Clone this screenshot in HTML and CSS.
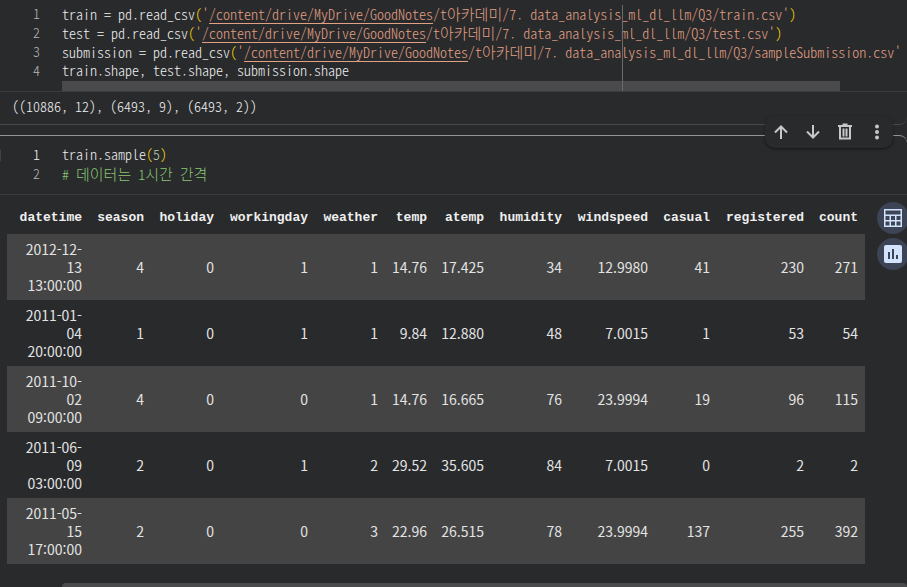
FILE: index.html
```
<!DOCTYPE html>
<html lang="ko">
<head>
  <meta charset="UTF-8" />
  <meta name="viewport" content="width=device-width, initial-scale=1.0"/>
  <title>Notebook</title>
  <link rel="stylesheet" href="styles.css">
</head>
<body>
  <section class="cell">
    <div class="editor">
      <div class="ruler"></div>
      <div class="line"><span class="num">1</span><code>train = pd.read_csv<span class="paren">(</span><span class="str">'<a href="#">/content/drive/MyDrive/GoodNotes</a>/t<span class="ko">아카데미</span>/7. data_analysis_ml_dl_llm/Q3/train.csv'</span><span class="paren">)</span></code></div>
      <div class="line"><span class="num">2</span><code>test = pd.read_csv<span class="paren">(</span><span class="str">'<a href="#">/content/drive/MyDrive/GoodNotes</a>/t<span class="ko">아카데미</span>/7. data_analysis_ml_dl_llm/Q3/test.csv'</span><span class="paren">)</span></code></div>
      <div class="line"><span class="num">3</span><code>submission = pd.read_csv<span class="paren">(</span><span class="str">'<a href="#">/content/drive/MyDrive/GoodNotes</a>/t<span class="ko">아카데미</span>/7. data_analysis_ml_dl_llm/Q3/sampleSubmission.csv'</span></code></div>
      <div class="line"><span class="num">4</span><code>train.shape, test.shape, submission.shape</code></div>
      <div class="scroll-thumb"></div>
    </div>
    <div class="output">((10886, 12), (6493, 9), (6493, 2))</div>
  </section>

  <section class="cell active">
    <div class="cell-toolbar">
      <button aria-label="Move cell up"><svg viewBox="0 0 18 18"><path d="M9 16V4M3 9.500l6-6 6 6"/></svg></button>
      <button aria-label="Move cell down"><svg viewBox="0 0 18 18"><path d="M9 2v12M3 8.500l6 6 6-6"/></svg></button>
      <button aria-label="Delete cell"><svg viewBox="0 0 18 18"><path d="M2 3h14M6.500 1.500h5M4 3v12.500h10V3M7.500 5.500v8M10.500 5.500v8"/></svg></button>
      <button aria-label="More actions"><svg class="dots" viewBox="0 0 18 18"><circle cx="9" cy="3.500" r="2"/><circle cx="9" cy="9" r="2"/><circle cx="9" cy="14.500" r="2"/></svg></button>
    </div>
    <div class="editor">
      <div class="line current"><span class="num">1</span><code>train.sample<span class="paren">(</span><span class="value">5</span><span class="paren">)</span></code></div>
      <div class="line"><span class="num">2</span><code class="comment"># <span class="ko">데이터는</span> 1<span class="ko">시간</span> <span class="ko">간격</span></code></div>
    </div>
    <div class="result">
      <table>
        <colgroup>
          <col class="w-date"><col class="w-62"><col class="w-70"><col class="w-94"><col class="w-70"><col class="w-temp"><col class="w-atemp"><col class="w-78"><col class="w-86"><col class="w-62"><col class="w-94"><col class="w-54">
        </colgroup>
        <thead>
          <tr><th>datetime</th><th>season</th><th>holiday</th><th>workingday</th><th>weather</th><th>temp</th><th>atemp</th><th>humidity</th><th>windspeed</th><th>casual</th><th>registered</th><th>count</th></tr>
        </thead>
        <tbody>
          <tr><td>2012-12-13 13:00:00</td><td>4</td><td>0</td><td>1</td><td>1</td><td>14.76</td><td>17.425</td><td>34</td><td>12.9980</td><td>41</td><td>230</td><td>271</td></tr>
          <tr><td>2011-01-04 20:00:00</td><td>1</td><td>0</td><td>1</td><td>1</td><td>9.84</td><td>12.880</td><td>48</td><td>7.0015</td><td>1</td><td>53</td><td>54</td></tr>
          <tr><td>2011-10-02 09:00:00</td><td>4</td><td>0</td><td>0</td><td>1</td><td>14.76</td><td>16.665</td><td>76</td><td>23.9994</td><td>19</td><td>96</td><td>115</td></tr>
          <tr><td>2011-06-09 03:00:00</td><td>2</td><td>0</td><td>1</td><td>2</td><td>29.52</td><td>35.605</td><td>84</td><td>7.0015</td><td>0</td><td>2</td><td>2</td></tr>
          <tr><td>2011-05-15 17:00:00</td><td>2</td><td>0</td><td>0</td><td>3</td><td>22.96</td><td>26.515</td><td>78</td><td>23.9994</td><td>137</td><td>255</td><td>392</td></tr>
        </tbody>
      </table>
      <div class="actions">
        <button aria-label="Convert to interactive table"><svg viewBox="0 0 18 18"><path fill-rule="evenodd" d="M0 0h18v18H0zM1.500 1.500v4h15v-4zM1.500 7v4h4V7zM7 7v4h4V7zM12.500 7v4h4V7zM1.500 12.500v4h4v-4zM7 12.500v4h4v-4zM12.500 12.500v4h4v-4z"/></svg></button>
        <button aria-label="View recommended plots"><svg viewBox="0 0 18 18"><path fill-rule="evenodd" d="M2 0h14a2 2 0 0 1 2 2v14a2 2 0 0 1-2 2H2a2 2 0 0 1-2-2V2a2 2 0 0 1 2-2zM4 7v7h2V7zM8 4v10h2V4zM12 10v4h2v-4z"/></svg></button>
      </div>
    </div>
    <div class="bottom-scroll"></div>
  </section>
</body>
</html>
```
FILE: styles.css
```
body {
  margin: 0;
  background: #292a2c;
  color: #e3e3e3;
  font-family: "Noto Sans CJK KR", sans-serif;
  font-size: 14px;
  overflow: hidden;
}
button {
  display: flex;
  align-items: center;
  justify-content: center;
  padding: 0;
  border: none;
  background: none;
  cursor: pointer;
}
.cell {
  position: relative;
  border-bottom: 1px solid #48494b;
  border-radius: 0 0 8px 0;
}
.editor {
  position: relative;
  padding-top: 4px;
  border-bottom: 1px solid #3c3d3f;
}
.line {
  display: flex;
  height: 19px;
  line-height: 19px;
}
.num {
  width: 40px;
  margin-right: 22px;
  text-align: right;
  color: #b4b4b4;
}
.current .num {
  color: #f0f0f0;
}
code, .num, .output {
  font-family: "Noto Sans CJK KR", monospace;
  font-size: 14px;
  font-weight: 300;
  font-feature-settings: "hwid";
  white-space: pre;
}
code, .output {
  color: #f0f0f0;
}
.ko {
  font-size: 15px;
}
.paren {
  color: #ffd700;
}
.str, .str a {
  color: #e2a084;
}
.str a {
  text-underline-offset: 3px;
}
.value {
  color: #b5cea8;
}
.comment {
  color: #87c872;
}
.ruler {
  position: absolute;
  left: 622px;
  top: 5px;
  bottom: 0;
  width: 1px;
  background: #6a6a6c;
}
.scroll-thumb {
  height: 10px;
  margin: 1px 67px 0 62px;
  background: #4a4a4c;
}
.output {
  padding: 4px 12px 8px;
  line-height: 20px;
}
.active {
  margin-top: 10px;
  border-top: 1px solid #949496;
  border-bottom: none;
  border-radius: 0 8px 0 0;
}
.active .editor {
  padding: 9px 0 11px;
}
/* edge of the run button */
.active .editor::before {
  content: "";
  position: absolute;
  left: 0;
  top: 14px;
  width: 1px;
  height: 11px;
  background: #414244;
}
.cell-toolbar {
  position: absolute;
  z-index: 1;
  right: 14px;
  top: -20px;
  display: flex;
  border-radius: 10px;
  background: #292a2c;
  box-shadow: 0 1px 3px rgba(0, 0, 0, 0.5);
}
.cell-toolbar button {
  width: 32px;
  height: 32px;
}
.cell-toolbar svg {
  width: 18px;
  height: 18px;
  fill: none;
  stroke: #c7c7c7;
  stroke-width: 2;
}
.cell-toolbar .dots {
  fill: #c7c7c7;
  stroke: none;
}
.result {
  display: flex;
  padding: 7px 0 19px 7px;
}
table {
  flex: none;
  table-layout: fixed;
  width: 858px;
  border-collapse: collapse;
}
th, td {
  text-align: right;
}
th {
  padding: 0 7px 1px;
  font-family: "Liberation Mono", monospace;
  font-size: 13px;
  line-height: 31px;
  color: #f0f0f0;
}
td {
  padding: 6px 7px;
  line-height: 18px;
}
tbody tr:nth-child(odd) {
  background: #444444;
}
.w-date { width: 82px; }
.w-54 { width: 54px; }
.w-62 { width: 62px; }
.w-70 { width: 70px; }
.w-78 { width: 78px; }
.w-86 { width: 86px; }
.w-94 { width: 94px; }
.w-temp { width: 49px; }
.w-atemp { width: 57px; }
.actions {
  flex: none;
  display: flex;
  flex-direction: column;
  gap: 4px;
  margin-left: 12px;
}
.actions button {
  width: 32px;
  height: 32px;
  border-radius: 50%;
  background: #3c4455;
}
.actions svg {
  width: 18px;
  height: 18px;
  fill: #d2e3fc;
}
.bottom-scroll {
  height: 10px;
  margin-left: 62px;
  border-radius: 4px;
  background: #4a4a4c;
}
```
